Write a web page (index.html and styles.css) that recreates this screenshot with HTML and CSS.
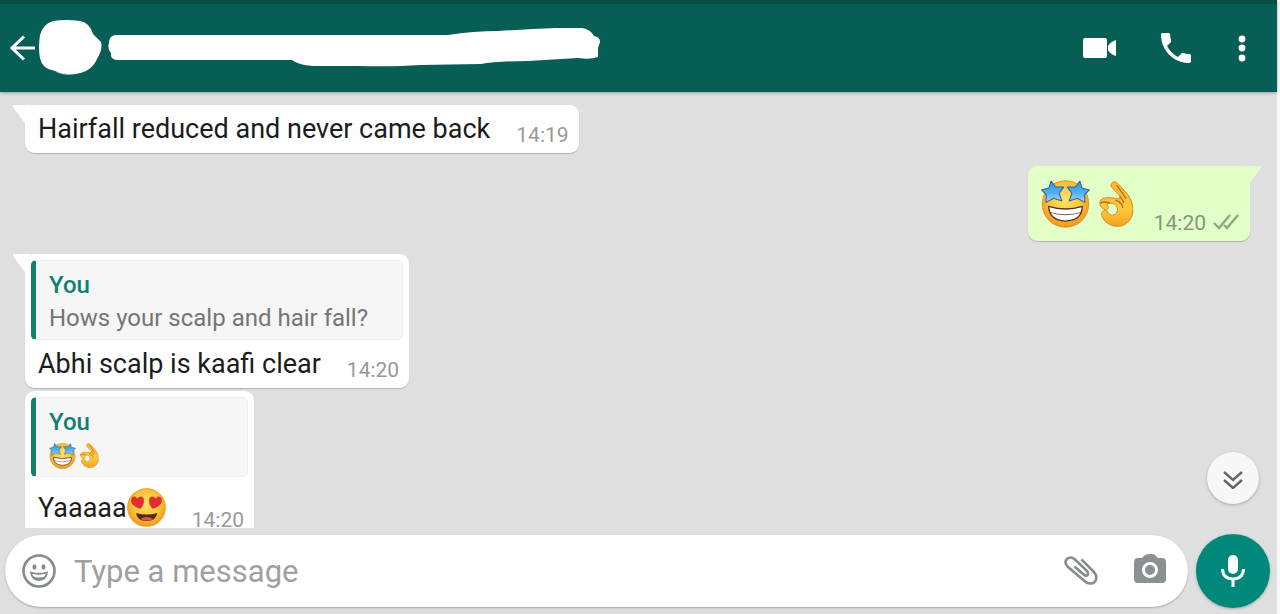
FILE: index.html
```html
<!DOCTYPE html>
<html lang="en">
<head>
  <meta charset="UTF-8">
  <meta name="viewport" content="width=device-width, initial-scale=1.0">
  <title>Chat</title>
  <link rel="stylesheet" href="styles.css">
</head>
<body>

<!-- Shared emoji drawings -->
<svg class="defs" width="0" height="0" aria-hidden="true">
  <defs>
    <radialGradient id="faceFill" cx="50%" cy="40%" r="60%">
      <stop offset="0" stop-color="#ffe36a"/>
      <stop offset="0.6" stop-color="#fcc236"/>
      <stop offset="1" stop-color="#f2961f"/>
    </radialGradient>
    <linearGradient id="starFill" x1="0" y1="0" x2="0" y2="1">
      <stop offset="0" stop-color="#2f97ea"/>
      <stop offset="0.55" stop-color="#4fb0f2"/>
      <stop offset="1" stop-color="#a9dcfb"/>
    </linearGradient>
    <linearGradient id="handFill" x1="0" y1="0" x2="0" y2="1">
      <stop offset="0" stop-color="#fbb52c"/>
      <stop offset="0.6" stop-color="#fdca3c"/>
      <stop offset="1" stop-color="#f3a222"/>
    </linearGradient>
  </defs>
  <symbol id="starstruck" viewBox="0 0 146 142">
    <circle cx="73" cy="71" r="69" fill="url(#faceFill)" stroke="#e8922a" stroke-width="3"/>
    <path d="M23 78Q73 94 123 78Q122 121 73 122Q24 120 23 78Z" fill="#fff" stroke="#54301a" stroke-width="4" stroke-linejoin="round"/>
    <path d="M26 96Q73 110 120 96" fill="none" stroke="#7a5238" stroke-width="3"/>
    <g fill="url(#starFill)" stroke="#2b6494" stroke-width="3" stroke-linejoin="round">
      <path d="M30 3L43 20L68 20L54 39L62 62L38 54L15 66L16 44L2 29L24 23Z"/>
      <path d="M116 3L103 20L78 20L92 39L84 62L108 54L131 66L130 44L144 29L122 23Z"/>
    </g>
  </symbol>
  <symbol id="okhand" viewBox="0 0 104 138">
    <path fill-rule="evenodd" d="M37 8C41 0 51 1 57 8L84 38C94 51 101 66 101 86C102 112 83 136 55 136C33 136 13 122 8 104C4 96 10 89 19 87C3 80 0 69 3 60C9 48 33 48 58 54L64 46L40 22C35 17 34 14 37 8ZM22 70C38 62 54 70 55 84C56 98 43 106 33 101C24 97 26 90 21 86C30 84 30 77 22 70Z" fill="url(#handFill)" stroke="#d98b1b" stroke-width="3" stroke-linejoin="round"/>
    <path d="M54 14L80 52M62 45L74 64M50 58C62 62 70 70 71 80M4 66C14 60 22 63 31 66" fill="none" stroke="#b96f16" stroke-width="4" stroke-linecap="round"/>
  </symbol>
  <symbol id="hearteyes" viewBox="0 0 116 116">
    <circle cx="58" cy="58" r="56" fill="url(#faceFill)" stroke="#ec9e2c" stroke-width="3"/>
    <path d="M27 74Q58 84 90 74Q88 97 58 98Q29 97 27 74Z" fill="#4c2d20"/>
    <path d="M40 92Q58 80 78 92Q58 101 40 92Z" fill="#ee5044"/>
    <g fill="#e32b32" stroke="#b9252a" stroke-width="1">
      <path d="M40 61C25 57 12 49 13 35C14 24 26 23 31 32C37 23 49 24 50 35C51 45 46 55 40 61Z"/>
      <path d="M76 61C91 57 104 49 103 35C102 24 90 23 85 32C79 23 67 24 66 35C65 45 70 55 76 61Z"/>
    </g>
  </symbol>
</svg>

<div class="app">
  <!-- Header -->
  <header class="header">
    <button class="icon-btn back-btn" aria-label="Back">
      <svg width="26" height="26" viewBox="0 0 26 26"><path d="M14 1.5L2 13L14 24.5M2 13H25" fill="none" stroke="#fff" stroke-width="3"/></svg>
    </button>
    <svg class="avatar" width="63" height="56" viewBox="0 0 63 56">
      <path d="M17 52Q29 58 43 52Z" fill="#b8c4c2"/>
      <path d="M14 1Q27-1 41 1Q51 3 54 14L62 22Q64 29 58 39Q52 53 34 54Q22 54 16 51Q3 49 1 38Q-1 28 1 15Q4 4 14 1Z" fill="#fff"/>
    </svg>
    <svg class="contact-name" width="492" height="40" viewBox="0 0 492 40">
      <path d="M7 7H340Q365 3 391 3Q422 1 448 0H474Q482 1 486 8Q492 9 492 14L490 20V29Q482 32 470 30L420 33Q390 33 373 36L312 37Q285 39 250 38H205Q190 37 184 32H9Q2 31 3 25Q-1 21 1 15Q1 8 7 7Z" fill="#fff"/>
    </svg>
    <div class="header-actions">
      <button class="icon-btn" aria-label="Video call">
        <svg width="34" height="22" viewBox="0 0 34 22" fill="#fff"><rect x="0" y="1" width="24" height="20" rx="2"/><path d="M25 9Q27 5 33 3V19Q27 17 25 13Z"/></svg>
      </button>
      <button class="icon-btn" aria-label="Call">
        <svg width="30" height="30" viewBox="3 3 18 18" fill="#fff"><path d="M6.6 10.8c1.4 2.8 3.8 5.1 6.6 6.6l2.2-2.2c.3-.3.7-.4 1-.2 1.1.4 2.3.6 3.6.6.6 0 1 .4 1 1V20c0 .6-.4 1-1 1-9.4 0-17-7.6-17-17 0-.6.5-1 1-1h3.5c.6 0 1 .4 1 1 0 1.2.2 2.5.6 3.6.1.3 0 .7-.2 1L6.6 10.8z"/></svg>
      </button>
      <button class="icon-btn menu-btn" aria-label="More options">
        <svg width="8" height="28" viewBox="0 0 8 28" fill="#fff"><circle cx="4" cy="5" r="3.4"/><circle cx="4" cy="14" r="3.4"/><circle cx="4" cy="24" r="3.4"/></svg>
      </button>
    </div>
  </header>

  <!-- Conversation -->
  <main class="chat">
    <div class="messages">
      <div class="bubble received tail">
        <div class="line">
          <p class="text">Hairfall reduced and never came back</p>
          <time class="time">14:19</time>
        </div>
      </div>

      <div class="bubble sent tail">
        <div class="line big">
          <p class="text emojis">
            <svg width="49" height="48" role="img" aria-label="Star-struck"><use href="#starstruck"/></svg>
            <svg width="35" height="46" role="img" aria-label="OK hand"><use href="#okhand"/></svg>
          </p>
          <time class="time">14:20</time>
          <svg class="ticks" width="27" height="18" viewBox="0 0 27 18" role="img" aria-label="Delivered"><path d="M1 10L6 15L17 2M11 12L14 15L25 2" fill="none" stroke="#8da881" stroke-width="2.4"/></svg>
        </div>
      </div>

      <div class="bubble received tail">
        <blockquote class="quote">
          <p class="quote-name">You</p>
          <p class="quote-text">Hows your scalp and hair fall?</p>
        </blockquote>
        <div class="line">
          <p class="text">Abhi scalp is kaafi clear</p>
          <time class="time">14:20</time>
        </div>
      </div>

      <div class="bubble received grouped">
        <blockquote class="quote">
          <p class="quote-name">You</p>
          <p class="quote-text emojis small">
            <svg width="27" height="26" role="img" aria-label="Star-struck"><use href="#starstruck"/></svg>
            <svg width="19" height="25" role="img" aria-label="OK hand"><use href="#okhand"/></svg>
          </p>
        </blockquote>
        <div class="line tall">
          <p class="text with-emoji">Yaaaaa<svg width="39" height="39" role="img" aria-label="Heart eyes"><use href="#hearteyes"/></svg></p>
          <time class="time">14:20</time>
        </div>
      </div>
    </div>

    <button class="scroll-btn" aria-label="Scroll to bottom">
      <svg width="20" height="18" viewBox="0 0 20 18"><path d="M1 1L10 9L19 1M1 9L10 17L19 9" fill="none" stroke="#666" stroke-width="2.4"/></svg>
    </button>
  </main>

  <!-- Message box -->
  <form class="composer">
    <div class="field">
      <button type="button" class="icon-btn" aria-label="Emoji">
        <svg width="34" height="34" viewBox="0 0 34 34"><circle cx="17" cy="17" r="15.5" fill="none" stroke="#858a8d" stroke-width="2.6"/><ellipse cx="12.5" cy="13" rx="2" ry="2.7" fill="#858a8d"/><ellipse cx="21.5" cy="13" rx="2" ry="2.7" fill="#858a8d"/><path d="M9 18.5Q17 21 25 18.5Q24 26 17 26Q10 26 9 18.5Z" fill="none" stroke="#858a8d" stroke-width="1.8"/><path d="M10 22Q17 25 24 22Q22 26 17 26Q12 26 10 22Z" fill="#858a8d"/></svg>
      </button>
      <input class="message-input" type="text" placeholder="Type a message" aria-label="Type a message">
      <button type="button" class="icon-btn" aria-label="Attach">
        <svg width="34" height="30" viewBox="0 0 34 30"><path d="M17.5 3.5L29.5 15.5C33 19 33 23.5 30.5 26C28 28.5 23.5 28 20.5 25L4 11C1 8 1 5 3 3C5 1 8.5 1 11 3.5L22.5 14.5C24.5 16.5 24.5 18 23.5 19C22.5 20 21 20 19 18L10.5 10.5" fill="none" stroke="#858a8d" stroke-width="2.5"/></svg>
      </button>
      <button type="button" class="icon-btn camera-btn" aria-label="Camera">
        <svg width="32" height="34" viewBox="0 0 32 34"><path d="M4 4H8L11 1Q13 0 15 0H18Q20 0 21 1L24 4H28Q32 4 32 8V25Q32 29 28 29H4Q0 29 0 25V8Q0 4 4 4Z" fill="#8b9092"/><circle cx="16" cy="16" r="6.5" fill="none" stroke="#fff" stroke-width="3"/></svg>
      </button>
    </div>
    <button type="button" class="mic-btn" aria-label="Record voice message">
      <svg width="24" height="34" viewBox="0 0 24 34"><rect x="7" y="1" width="10" height="19" rx="5" fill="#fff"/><path d="M1.5 15Q2 25 12 25Q22 25 22.5 15M12 25V33" fill="none" stroke="#fff" stroke-width="3"/></svg>
    </button>
  </form>
</div>

</body>
</html>
```
FILE: styles.css
```css
/* Basic reset */
* {
  margin: 0;
  padding: 0;
  box-sizing: border-box;
}

body {
  font-family: Roboto, "Liberation Sans", sans-serif;
  background-color: #f8f8f8;
  color: #1c1c1c;
}

svg {
  display: block;
  flex-shrink: 0;
}

.defs {
  position: absolute;
}

button {
  border: none;
  background: none;
  cursor: pointer;
}

.app {
  display: flex;
  flex-direction: column;
  height: 100vh;
  margin-right: 3px;
  background-color: #dfdfdf;
}

/* Header */
.header {
  display: flex;
  align-items: center;
  height: 92px;
  padding: 0 25px 0 10px;
  border-top: 4px solid #064d43;
  background-color: #075e54;
  box-shadow: 0 1px 3px rgba(0, 0, 0, 0.3);
  z-index: 1;
}

.icon-btn {
  display: flex;
  align-items: center;
  justify-content: center;
  flex-shrink: 0;
}

.avatar {
  margin-left: 3px;
}

.contact-name {
  margin-left: 6px;
}

.header-actions {
  display: flex;
  align-items: center;
  gap: 36px;
  margin-left: auto;
}

.header-actions .icon-btn {
  width: 40px;
  height: 40px;
}

.header-actions .menu-btn {
  width: 20px;
}

/* Conversation */
.chat {
  position: relative;
  flex: 1;
  min-height: 0;
}

.messages {
  display: flex;
  flex-direction: column;
  align-items: flex-start;
  gap: 13px;
  height: 100%;
  padding: 13px 27px 0 25px;
  overflow: hidden;
}

.bubble {
  display: flow-root;
  position: relative;
  flex-shrink: 0;
  padding: 0 6px;
  border-radius: 9px;
  background-color: #fff;
  box-shadow: 0 1px 1px rgba(0, 0, 0, 0.2);
}

.bubble.sent {
  align-self: flex-end;
  background-color: #e1ffc7;
}

.bubble.grouped {
  margin-top: -10px;
}

.bubble.tail::before {
  content: "";
  position: absolute;
  top: 0;
  left: -12px;
  width: 17px;
  height: 18px;
  background-color: inherit;
  clip-path: polygon(0 0, 100% 0, 100% 100%, 12px 100%, 0 2px);
}

.bubble.sent.tail::before {
  left: auto;
  right: -11px;
  transform: scaleX(-1);
}

.line {
  display: flex;
  align-items: center;
  min-height: 48px;
  padding: 0 4px 0 7px;
}

.line.big {
  min-height: 75px;
}

.line.tall {
  min-height: 61px;
}

.text {
  font-size: 27px;
  line-height: 32px;
}

.time {
  align-self: flex-end;
  margin-left: auto;
  padding: 0 0 6px 26px;
  font-size: 21px;
  line-height: 24px;
  color: #999;
}

.sent .time {
  padding-left: 20px;
  color: #86977b;
}

.ticks {
  align-self: flex-end;
  margin: 0 0 10px 7px;
}

.emojis {
  display: flex;
  align-items: center;
  gap: 9px;
}

.emojis.small {
  gap: 4px;
}

.with-emoji {
  display: flex;
  align-items: center;
}

/* Quoted message */
.quote {
  height: 80px;
  margin-top: 6px;
  padding: 8px 12px 0 13px;
  border: 1px solid #eee;
  border-left: 5px solid #128070;
  border-radius: 5px;
  background-color: #f6f6f6;
}

.quote-name {
  font-size: 24px;
  font-weight: 500;
  line-height: 33px;
  color: #128070;
}

.quote-text {
  min-height: 33px;
  font-size: 24px;
  line-height: 33px;
  color: #757575;
}

/* Round button over the chat */
.scroll-btn {
  position: absolute;
  right: 18px;
  bottom: 24px;
  display: flex;
  align-items: center;
  justify-content: center;
  width: 52px;
  height: 52px;
  padding-top: 3px;
  border-radius: 50%;
  background-color: #f7f7f7;
  box-shadow: 0 1px 3px rgba(0, 0, 0, 0.25);
}

/* Message box */
.composer {
  display: flex;
  align-items: center;
  gap: 8px;
  padding: 6px 7px 6px 5px;
}

.field {
  display: flex;
  align-items: center;
  flex: 1;
  height: 72px;
  padding: 0 22px 0 17px;
  border-radius: 36px;
  background-color: #fff;
  box-shadow: 0 1px 2px rgba(0, 0, 0, 0.25);
}

.message-input {
  flex: 1;
  min-width: 0;
  margin-left: 18px;
  border: none;
  outline: none;
  background: none;
  font-family: inherit;
  font-size: 31px;
  color: #1c1c1c;
}

.message-input::placeholder {
  color: #a0a0a0;
  opacity: 1;
}

.camera-btn {
  margin-left: 36px;
}

.mic-btn {
  display: flex;
  align-items: center;
  justify-content: center;
  width: 74px;
  height: 74px;
  border-radius: 50%;
  background-color: #00897b;
  box-shadow: 0 1px 3px rgba(0, 0, 0, 0.25);
}
```
